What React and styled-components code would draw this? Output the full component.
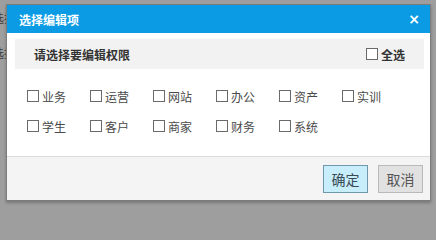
import React from 'react';
import styled, { createGlobalStyle } from 'styled-components';

const GlobalStyle = createGlobalStyle`
  html, body {
    margin: 0;
    padding: 0;
    width: 436px;
    height: 209px;
    overflow: hidden;
    background: #9e9e9e;
    font-family: "Noto Sans CJK SC", "Noto Sans", sans-serif;
  }
  * {
    box-sizing: border-box;
  }
`;

const Page = styled.div`
  position: relative;
  width: 436px;
  height: 209px;
  background: #9e9e9e;
  overflow: hidden;
`;

const BackLines = styled.div`
  display: flex;
  flex-direction: column;
  gap: 23px;
  padding-top: 12px;
  margin-left: -8px;
`;

const BackText = styled.div`
  font-size: 12px;
  line-height: 12px;
  color: #3a3a3a;
`;

const Dialog = styled.div`
  position: absolute;
  left: 6px;
  top: 4px;
  width: 425px;
  height: 197px;
  display: flex;
  flex-direction: column;
  background: #fff;
  border: 1px solid #7c7c7c;
  box-shadow: 0 2px 3px rgba(0, 0, 0, 0.25);
`;

const TitleBar = styled.div`
  height: 28px;
  flex: none;
  background: #0a9be4;
  display: flex;
  align-items: center;
  justify-content: space-between;
  padding: 0 10px 0 12px;
  color: #fff;
  font-size: 12px;
  font-weight: bold;
`;

const Close = styled.span`
  font-family: "DejaVu Sans", sans-serif;
  font-size: 14px;
  font-weight: bold;
  line-height: 1;
`;

const Body = styled.div`
  flex: 1;
  padding: 6px 6px 0 8px;
  border-bottom: 1px solid #dcdcdc;
`;

const Header = styled.div`
  height: 30px;
  background: #f2f2f2;
  display: flex;
  align-items: center;
  justify-content: space-between;
  padding: 0 19px;
  font-size: 12px;
  font-weight: bold;
  color: #333;
`;

const Options = styled.div`
  display: grid;
  grid-template-columns: repeat(6, 63px);
  grid-auto-rows: 30px;
  margin-top: 12px;
  padding-left: 12px;
`;

const Option = styled.label`
  display: flex;
  align-items: center;
  gap: 3px;
  font-size: 12px;
  color: ${p => (p.$bold ? '#333' : '#4a4a4a')};
  font-weight: ${p => (p.$bold ? 'bold' : 'normal')};
`;

const Box = styled.span`
  width: 12px;
  height: 12px;
  border: 1px solid #6a6a6a;
  background: #fff;
  flex: none;
`;

const Footer = styled.div`
  height: 43px;
  flex: none;
  background: #f4f4f4;
  display: flex;
  align-items: center;
  justify-content: flex-end;
  gap: 10px;
  padding-right: 7px;
`;

const Button = styled.button`
  width: 45px;
  height: 28px;
  padding: 0;
  font-family: "Noto Sans CJK SC", sans-serif;
  font-size: 14px;
  color: ${p => (p.$primary ? '#3a4a55' : '#555')};
  background: ${p => (p.$primary ? '#c8eefb' : '#e1e1e1')};
  border: 1px solid ${p => (p.$primary ? '#6f98ac' : '#b9b9b9')};
  border-radius: 0;
`;

const items = ['业务', '运营', '网站', '办公', '资产', '实训', '学生', '客户', '商家', '财务', '系统'];

export default function App() {
  return (
    <Page>
      <GlobalStyle />
      <BackLines>
        <BackText>选择</BackText>
        <BackText>选择</BackText>
      </BackLines>
      <Dialog>
        <TitleBar>
          <span>选择编辑项</span>
          <Close>×</Close>
        </TitleBar>
        <Body>
          <Header>
            <span>请选择要编辑权限</span>
            <Option $bold>
              <Box />
              全选
            </Option>
          </Header>
          <Options>
            {items.map(name => (
              <Option key={name}>
                <Box />
                {name}
              </Option>
            ))}
          </Options>
        </Body>
        <Footer>
          <Button $primary>确定</Button>
          <Button>取消</Button>
        </Footer>
      </Dialog>
    </Page>
  );
}
